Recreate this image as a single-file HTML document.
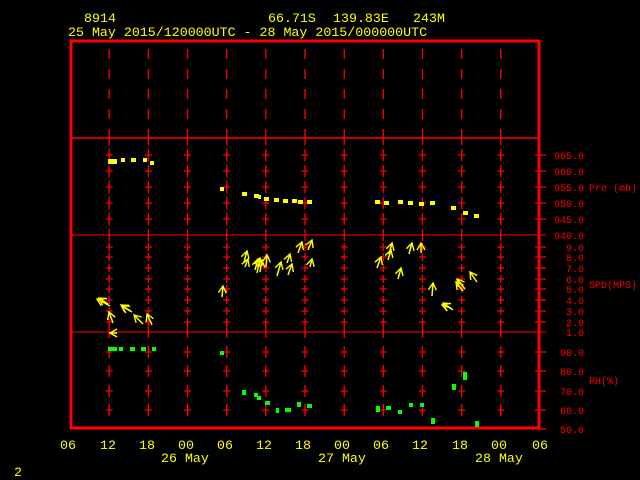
<!DOCTYPE html>
<html><head><meta charset="utf-8"><style>
html,body{margin:0;padding:0;background:#000;width:640px;height:480px;overflow:hidden}
svg{display:block}
text{font-family:"Liberation Mono",monospace}
.y{fill:#ff0;font-size:13.3px}
.r{fill:#f00;font-size:10px}
</style></head><body>
<svg width="640" height="480" viewBox="0 0 640 480">
<defs>
<marker id="ah" markerWidth="10" markerHeight="10" refX="8" refY="5" orient="auto" markerUnits="userSpaceOnUse">
<path d="M1,1 L8,5 L1,9" fill="none" stroke="#ff0" stroke-width="1.4"/>
</marker>
<g id="col" stroke="#f00" stroke-width="1.3" fill="none">
<path d="M0,49V59M0,69V79M0,89V99M0,109V119M0,129V145"/>
<path d="M-3.5,155h7M-3.5,171h7M-3.5,187h7M-3.5,203h7M-3.5,219h7"/>
<path d="M0,149V161M0,165V177M0,181V193M0,197V209M0,213V225M0,229V241"/>
<path d="M-3.5,247h7M-3.5,257h7M-3.5,268h7M-3.5,279h7M-3.5,289h7M-3.5,300h7M-3.5,311h7M-3.5,322h7"/>
<path d="M0,243V251M0,253V261M0,264V272M0,275V283M0,285V293M0,296V304M0,307V315M0,318V338"/>
<path d="M-3.5,352h7M-3.5,371h7M-3.5,391h7M-3.5,410h7"/>
<path d="M0,346V358M0,365V377M0,385V397M0,404V416"/>
</g>
</defs>
<text class="y" x="84" y="22">8914</text>
<text class="y" x="268" y="22">66.71S</text>
<text class="y" x="333" y="22">139.83E</text>
<text class="y" x="413" y="22">243M</text>
<text class="y" x="68" y="36">25 May 2015/120000UTC - 28 May 2015/000000UTC</text>

<use href="#col" x="109.2"/><use href="#col" x="148.4"/><use href="#col" x="187.5"/><use href="#col" x="226.7"/>
<use href="#col" x="265.8"/><use href="#col" x="305"/><use href="#col" x="344.2"/><use href="#col" x="383.3"/>
<use href="#col" x="422.5"/><use href="#col" x="461.7"/><use href="#col" x="500.8"/>

<g stroke="#f00" stroke-width="1.5">
<line x1="70" y1="138" x2="540" y2="138"/>
<line x1="70" y1="235" x2="546" y2="235" stroke-width="1"/>
<line x1="70" y1="332" x2="546" y2="332" stroke-width="1"/>
</g>
<path stroke="#f00" stroke-width="1.3" d="M535,155h11M535,171h11M535,187h11M535,203h11M535,219h11M535,247h11M535,257h11M535,268h11M535,279h11M535,289h11M535,300h11M535,311h11M535,322h11M535,352h11M535,371h11M535,391h11M535,410h11M535,429h11"/>
<rect x="71" y="41" width="468" height="387" fill="none" stroke="#f00" stroke-width="3"/>

<g class="r" text-anchor="end">
<text x="584" y="159">965.0</text><text x="584" y="175">960.0</text><text x="584" y="191">955.0</text>
<text x="584" y="207">950.0</text><text x="584" y="223">945.0</text><text x="584" y="239">940.0</text>
<text x="584" y="251">9.0</text><text x="584" y="261">8.0</text><text x="584" y="272">7.0</text>
<text x="584" y="283">6.0</text><text x="584" y="293">5.0</text><text x="584" y="304">4.0</text>
<text x="584" y="315">3.0</text><text x="584" y="326">2.0</text><text x="584" y="336">1.0</text>
<text x="584" y="356">90.0</text><text x="584" y="375">80.0</text><text x="584" y="395">70.0</text>
<text x="584" y="414">60.0</text><text x="584" y="433">50.0</text>
</g>
<text class="r" x="589" y="191">Pre (mb)</text>
<text class="r" x="589" y="288">SPD(MPS)</text>
<text class="r" x="589" y="384">RH(%)</text>

<g fill="#ff0">
<rect x="108" y="159" width="9" height="5"/><rect x="121" y="158" width="4" height="4"/><rect x="131" y="158" width="5" height="4"/>
<rect x="143" y="158" width="4" height="4"/><rect x="150" y="161" width="4" height="4"/>
<rect x="220" y="187" width="4" height="4"/>
<rect x="242" y="192" width="5" height="4"/><rect x="254" y="194" width="5" height="4"/><rect x="258" y="195" width="3" height="4"/>
<rect x="264" y="197" width="5" height="4"/><rect x="274" y="198" width="5" height="4"/><rect x="283" y="199" width="5" height="4"/>
<rect x="292" y="199" width="5" height="4"/><rect x="298" y="200" width="5" height="4"/><rect x="307" y="200" width="5" height="4"/>
<rect x="375" y="200" width="5" height="4"/><rect x="384" y="201" width="5" height="4"/><rect x="398" y="200" width="5" height="4"/>
<rect x="408" y="201" width="5" height="4"/><rect x="419" y="202" width="5" height="4"/><rect x="430" y="201" width="5" height="4"/>
<rect x="451" y="206" width="5" height="4"/><rect x="463" y="211" width="5" height="4"/><rect x="474" y="214" width="5" height="4"/>
</g>
<g fill="#0f0">
<rect x="108" y="347" width="9" height="4"/><rect x="119" y="347" width="4" height="4"/><rect x="130" y="347" width="5" height="4"/>
<rect x="141" y="347" width="5" height="4"/><rect x="152" y="347" width="4" height="4"/>
<rect x="220" y="351" width="4" height="4"/>
<rect x="242" y="390" width="4" height="5"/><rect x="254" y="393" width="4" height="4"/><rect x="257" y="396" width="4" height="4"/>
<rect x="265" y="401" width="5" height="4"/><rect x="276" y="408" width="3" height="5"/><rect x="285" y="408" width="6" height="4"/>
<rect x="297" y="402" width="4" height="5"/><rect x="307" y="404" width="5" height="4"/>
<rect x="376" y="406" width="4" height="6"/><rect x="386" y="406" width="5" height="4"/><rect x="398" y="410" width="4" height="4"/>
<rect x="409" y="403" width="4" height="4"/><rect x="420" y="403" width="4" height="4"/><rect x="431" y="418" width="4" height="6"/>
<rect x="452" y="384" width="4" height="6"/><rect x="463" y="372" width="4" height="8"/><rect x="475" y="421" width="4" height="6"/>
</g>
<g stroke="#ff0" stroke-width="1.5" marker-end="url(#ah)">
<line x1="110" y1="306" x2="97" y2="299"/><line x1="108" y1="304" x2="99" y2="298"/>
<line x1="113" y1="323" x2="109" y2="312"/>
<line x1="132" y1="312" x2="121" y2="305"/><line x1="130" y1="311" x2="122" y2="306"/>
<line x1="143" y1="324" x2="134" y2="315"/><line x1="152" y1="325" x2="147" y2="314"/>
<line x1="117" y1="333" x2="110" y2="333"/>
<line x1="222" y1="297" x2="223" y2="286"/>
<line x1="244" y1="262" x2="247" y2="251"/><line x1="245" y1="267" x2="248" y2="259"/>
<line x1="257" y1="273" x2="260" y2="258"/><line x1="255" y1="270" x2="258" y2="259"/><line x1="260" y1="272" x2="262" y2="260"/>
<line x1="266" y1="267" x2="267" y2="255"/><line x1="277" y1="276" x2="281" y2="262"/>
<line x1="287" y1="263" x2="290" y2="254"/><line x1="288" y1="275" x2="292" y2="264"/>
<line x1="298" y1="253" x2="302" y2="242"/><line x1="308" y1="250" x2="312" y2="240"/>
<line x1="310" y1="267" x2="312" y2="259"/>
<line x1="377" y1="268" x2="381" y2="257"/><line x1="389" y1="254" x2="392" y2="243"/>
<line x1="388" y1="260" x2="391" y2="250"/><line x1="409" y1="254" x2="412" y2="243"/>
<line x1="421" y1="253" x2="421" y2="243"/><line x1="398" y1="279" x2="401" y2="268"/>
<line x1="432" y1="296" x2="433" y2="283"/><line x1="465" y1="289" x2="457" y2="279"/>
<line x1="463" y1="291" x2="456" y2="282"/><line x1="477" y1="282" x2="470" y2="272"/>
<line x1="453" y1="310" x2="443" y2="303"/><line x1="451" y1="308" x2="442" y2="305"/>
</g>

<g class="y" text-anchor="middle">
<text x="68" y="449">06</text><text x="108" y="449">12</text><text x="147" y="449">18</text><text x="186" y="449">00</text>
<text x="225" y="449">06</text><text x="264" y="449">12</text><text x="303" y="449">18</text><text x="342" y="449">00</text>
<text x="381" y="449">06</text><text x="420" y="449">12</text><text x="460" y="449">18</text><text x="499" y="449">00</text>
<text x="540" y="449">06</text>
</g>
<text class="y" x="161" y="462">26 May</text>
<text class="y" x="318" y="462">27 May</text>
<text class="y" x="475" y="462">28 May</text>
<text class="y" x="14" y="476">2</text>
</svg>
</body></html>
